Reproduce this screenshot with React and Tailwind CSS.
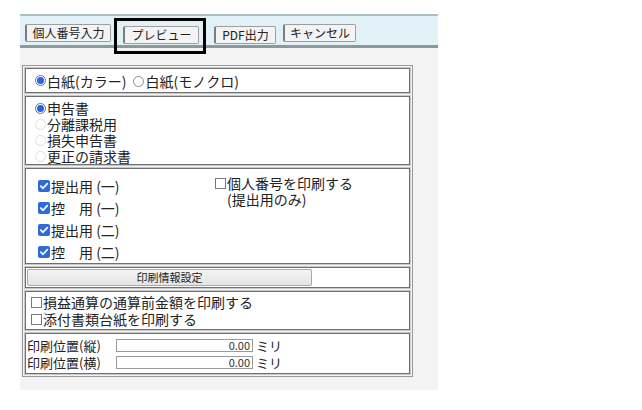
import React from 'react'

const font = { fontFamily: '"Meiryo UI", "Noto Sans CJK JP", "Liberation Sans", sans-serif' }

function Radio({ state }) {
  if (state === 'on') {
    return (
      <span className="inline-flex items-center justify-center w-[11px] h-[11px] rounded-full border border-[#4a74c9] bg-white shrink-0">
        <span className="w-[7px] h-[7px] rounded-full bg-[#2b63d4]" />
      </span>
    )
  }
  if (state === 'disabled') {
    return <span className="inline-block w-[11px] h-[11px] rounded-full border border-[#dedede] bg-white shrink-0" />
  }
  return <span className="inline-block w-[11px] h-[11px] rounded-full border border-[#8a8a8a] bg-white shrink-0" />
}

function Check({ on }) {
  if (on) {
    return (
      <span className="inline-flex items-center justify-center w-[12px] h-[12px] rounded-[2px] bg-[#2f6bd8] shrink-0">
        <svg width="10" height="10" viewBox="0 0 10 10">
          <path d="M1.8 5.2 L4 7.3 L8.3 2.6" stroke="white" strokeWidth="1.7" fill="none" strokeLinecap="round" strokeLinejoin="round" />
        </svg>
      </span>
    )
  }
  return <span className="inline-block w-[11px] h-[11px] border border-[#7a7a7a] bg-white shrink-0" />
}

function ToolButton({ children, w }) {
  return (
    <button className={`${w} h-[18px] border border-[#9e9e9e] border-l-[2px] border-l-[#7c7c7c] rounded-[2px] bg-[#f3f3f3] text-[12px] leading-none text-[#222]`}>
      {children}
    </button>
  )
}

function Section({ className, children }) {
  return (
    <div className={`border border-[#707070] outline outline-1 outline-[#c9c9c9] bg-white ${className}`}>
      {children}
    </div>
  )
}

export default function App() {
  return (
    <div className="w-[642px] h-[410px] bg-white pt-[14px] pl-[20px]" style={font}>
      <div className="w-[418px] h-[376px] bg-[#f3f3f3]">
        {/* toolbar */}
        <div className="h-[2px] bg-[#a8c0c4]" />
        <div className="relative h-[32px] bg-[#e2f0f7] border-b-[3px] border-[#8e9799] flex items-center gap-[7px] pl-[5px] pt-[5px]">
          <ToolButton w="w-[86px]">個人番号入力</ToolButton>
          <div className="ml-[5px]">
            <ToolButton w="w-[76px]">プレビュー</ToolButton>
          </div>
          <div className="ml-[8px]">
            <ToolButton w="w-[62px]">PDF出力</ToolButton>
          </div>
          <ToolButton w="w-[73px]">キャンセル</ToolButton>
          <div className="absolute left-[94px] top-[2px] w-[92px] h-[36px] border-[3px] border-black" />
        </div>

        {/* main box */}
        <div className="mt-[17px] ml-[2px] w-[391px] border border-[#9a9a9a] p-[2px] flex flex-col gap-[3px] text-[14px] text-[#222] bg-[#f3f3f3]">
          <Section className="h-[25px] flex items-center pl-[9px] leading-none">
            <Radio state="on" />
            <span className="ml-[1px]">白紙(カラー)</span>
            <span className="ml-[7px]"><Radio state="off" /></span>
            <span className="ml-[1px]">白紙(モノクロ)</span>
          </Section>

          <Section className="h-[69px] pl-[9px] pt-[3px]">
            {[
              ['on', '申告書'],
              ['disabled', '分離課税用'],
              ['disabled', '損失申告書'],
              ['disabled', '更正の請求書'],
            ].map(([s, t]) => (
              <div key={t} className="flex items-center h-[16px]">
                <Radio state={s} />
                <span className="ml-[1px] block h-[16px] leading-[16px]">{t}</span>
              </div>
            ))}
          </Section>

          <Section className="h-[96px] pl-[12px] pt-[6px] flex">
            <div className="w-[177px] flex flex-col">
              {[
                ['提出用', '(一)'],
                ['控\u3000用', '(一)'],
                ['提出用', '(二)'],
                ['控\u3000用', '(二)'],
              ].map(([a, b], i) => (
                <div key={i} className="flex items-center h-[22px]">
                  <Check on />
                  <span className="ml-[1px]">{a} {b}</span>
                </div>
              ))}
            </div>
            <div className="leading-[16px]">
              <div className="flex items-center">
                <Check on={false} />
                <span className="ml-[1px]">個人番号を印刷する</span>
              </div>
              <div className="pl-[12px]">(提出用のみ)</div>
            </div>
          </Section>

          <Section className="h-[21px] flex items-center pl-[1px]">
            <button className="w-[285px] h-[17px] border border-[#a9a9a9] rounded-[2px] bg-gradient-to-b from-[#f4f4f4] to-[#e4e4e4] text-[11px] leading-none text-[#222]">
              印刷情報設定
            </button>
          </Section>

          <Section className="h-[39px] pl-[5px] pt-[2px] leading-[17px]">
            <div className="flex items-center">
              <Check on={false} />
              <span className="ml-[1px]">損益通算の通算前金額を印刷する</span>
            </div>
            <div className="flex items-center">
              <Check on={false} />
              <span className="ml-[1px]">添付書類台紙を印刷する</span>
            </div>
          </Section>

          <Section className="h-[41px] pl-[1px] pt-[3px] text-[13px]">
            {['印刷位置(縦)', '印刷位置(横)'].map((l) => (
              <div key={l} className="flex items-center h-[17px]">
                <span className="w-[89px] leading-none">{l}</span>
                <span className="w-[137px] h-[13px] border border-[#9a9a9a] bg-white text-right text-[11px] leading-[11px] pr-[2px] text-[#333]">0.00</span>
                <span className="ml-[3px] leading-none">ミリ</span>
              </div>
            ))}
          </Section>
        </div>
      </div>
    </div>
  )
}
